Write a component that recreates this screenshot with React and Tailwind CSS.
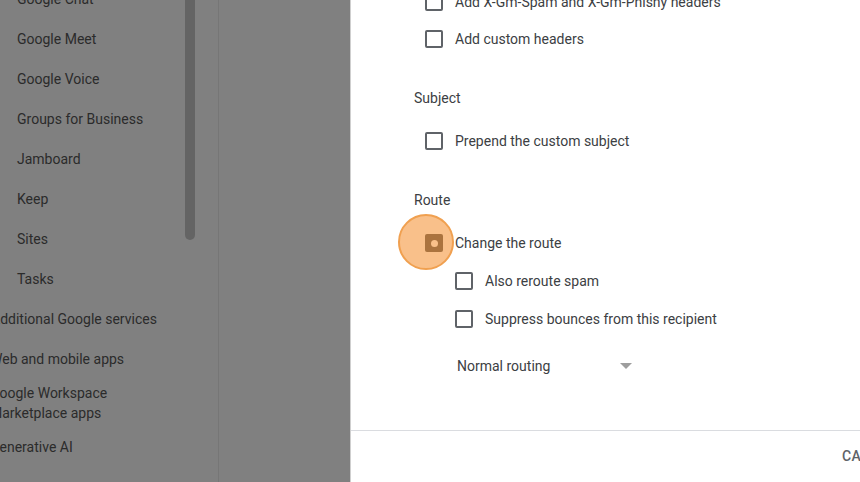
const services = [
  "Google Chat",
  "Google Meet",
  "Google Voice",
  "Groups for Business",
  "Jamboard",
  "Keep",
  "Sites",
  "Tasks",
];

function Checkbox({checked}) {
  if (checked) {
    return (
      <span className="w-[18px] h-[18px] rounded-[2px] bg-[#3c4043] flex items-center justify-center shrink-0">
        <span className="w-[7px] h-[7px] rounded-full bg-white" />
      </span>
    );
  }
  return (
    <span className="w-[18px] h-[18px] rounded-[2px] border-2 border-[#5f6368] shrink-0" />
  );
}

function Row({label, checked, indent, className = ""}) {
  return (
    <div
      className={`flex items-center gap-[12px] ${indent ? "pl-[104px]" : "pl-[74px]"} ${className}`}
    >
      <Checkbox checked={checked} />
      <span>{label}</span>
    </div>
  );
}

export default function App() {
  return (
    <div
      className="w-[860px] h-[482px] flex overflow-hidden bg-white"
      style={{fontFamily: "Roboto, 'Liberation Sans', sans-serif"}}
    >
      {/* dimmed admin console behind the dialog */}
      <div className="w-[350px] h-full flex bg-[#808080] shrink-0">
        <div className="w-[219px] h-full border-r border-[#767676] relative overflow-hidden text-[14px] text-[#2b2b2b]">
          <div className="absolute left-[185px] top-0 w-[10px] h-[240px] rounded-b-full bg-[#646464]" />
          <div className="mt-[-21px] flex flex-col">
            {services.map((s) => (
              <div key={s} className="h-[40px] flex items-center pl-[17px]">
                {s}
              </div>
            ))}
            <div className="h-[40px] flex items-center ml-[-9px]">
              Additional Google services
            </div>
            <div className="h-[40px] flex items-center ml-[-10px]">
              Web and mobile apps
            </div>
            <div className="h-[48px] flex flex-col justify-center ml-[-10px] leading-[20px]">
              <span>Google Workspace</span>
              <span>Marketplace apps</span>
            </div>
            <div className="h-[40px] flex items-center ml-[-10px]">
              Generative AI
            </div>
          </div>
        </div>
        <div className="flex-1" />
      </div>

      {/* dialog */}
      <div className="flex-1 h-full flex flex-col border-l border-[#cfcfcf] text-[14px] text-[#3c4043] relative">
        <div className="flex-1 flex flex-col">
          <div className="mt-[-17px]">
            <Row label="Add X-Gm-Spam and X-Gm-Phishy headers" className="h-[38px]" />
            <Row label="Add custom headers" className="h-[36px]" />
          </div>
          <div className="mt-[31px] h-[20px] flex items-center pl-[63px]">Subject</div>
          <Row label="Prepend the custom subject" className="h-[38px] mt-[14px]" />
          <div className="mt-[30px] h-[20px] flex items-center pl-[63px]">Route</div>
          <div className="relative mt-[14px]">
            <Row label="Change the route" checked className="h-[38px]" />
            <div className="absolute left-[47px] top-[-10px] w-[56px] h-[56px] rounded-full bg-[rgba(245,150,60,0.6)] border-2 border-[#f0a050]" />
          </div>
          <Row label="Also reroute spam" indent className="h-[38px]" />
          <Row label="Suppress bounces from this recipient" indent className="h-[38px]" />
          <div className="mt-[18px] h-[20px] flex items-center pl-[106px]">
            <span className="w-[163px]">Normal routing</span>
            <svg width="12" height="6" viewBox="0 0 12 6">
              <path d="M0 0h12L6 6z" fill="#9e9e9e" />
            </svg>
          </div>
        </div>
        <div className="h-[52px] border-t border-[#dadce0] flex items-center pl-[491px] whitespace-nowrap">
          <span className="text-[14px] font-medium text-[#5f6368] tracking-[0.3px]">CANCEL</span>
        </div>
      </div>
    </div>
  );
}
